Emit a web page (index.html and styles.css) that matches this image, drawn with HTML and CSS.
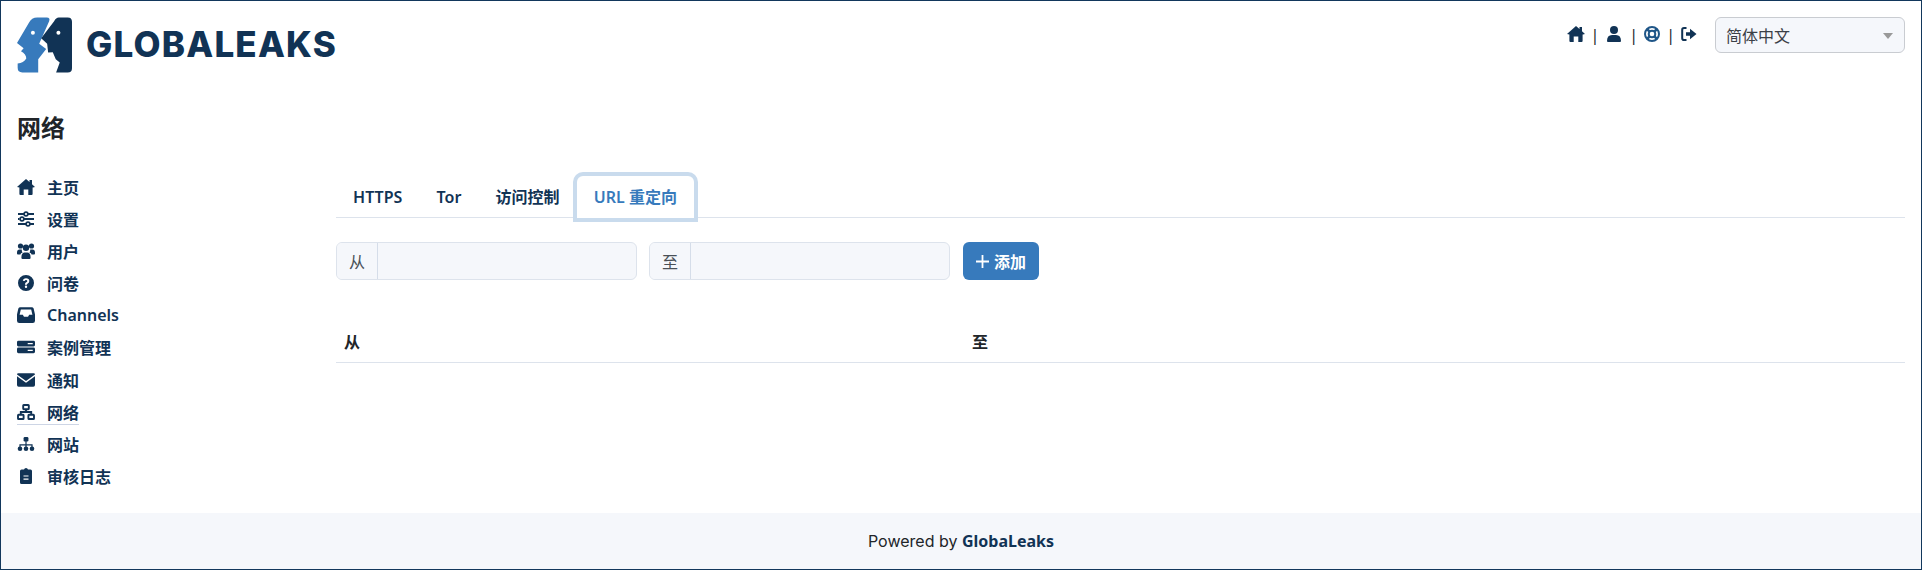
FILE: index.html
```html
<!DOCTYPE html>
<html lang="zh">
<head>
<meta charset="utf-8">
<title>GlobaLeaks</title>
<link rel="stylesheet" href="styles.css">
</head>
<body>
<div class="app">
  <header class="topbar">
    <div class="brand">
      <svg class="logo-mark" viewBox="52 52 166 166">
        <path fill="#377abc" d="M88,68 Q96,52 113,52 L142,52 Q153,52 149,63 L119,131 L140,147 L116,178 L116,218 L68,218 Q54,218 54,204 L54,191 Q72,189 80,176 Q80,163 64,154 L72,145 L52,129 Z"/>
        <circle fill="#fff" cx="100" cy="98" r="6"/>
        <path fill="#113355" d="M178,52 L205,52 Q218,52 218,65 L218,205 Q218,218 205,218 L170,218 L181,188 L169,178 L160,157 L146,158 L143,131 L125,115 L164,63 Q170,52 178,52 Z"/>
        <circle fill="#fff" cx="177" cy="98" r="6"/>
      </svg>
      <span class="wordmark">GLOBALEAKS</span>
    </div>
    <div class="tools">
      <nav class="quick">
        <svg class="qi home" viewBox="0 0 18 16"><path d="M9 0 L12.5 3 L12.5 1 L15 1 L15 5.2 L18 8 L16 8.4 L15.6 8.4 L15.6 15 Q15.6 16 14.6 16 L11.3 16 L11.3 10.5 L6.7 10.5 L6.7 16 L3.4 16 Q2.4 16 2.4 15 L2.4 8.4 L0 8 Z"/></svg>
        <span class="sep">|</span>
        <svg class="qi user" viewBox="0 0 14 16"><circle cx="7" cy="4" r="4"/><path d="M0 15 Q0 9 5 9 L9 9 Q14 9 14 15 Q14 16 13 16 L1 16 Q0 16 0 15 Z"/></svg>
        <span class="sep">|</span>
        <svg class="qi ring" viewBox="0 0 16 16"><circle cx="8" cy="8" r="7" class="ring-o"/><circle cx="8" cy="8" r="3.3" class="ring-i"/><path d="M3 3 L5.6 5.6 M13 3 L10.4 5.6 M3 13 L5.6 10.4 M13 13 L10.4 10.4" class="ring-s"/></svg>
        <span class="sep">|</span>
        <svg class="qi out" viewBox="0 0 16 16"><path d="M5.5 2 L3 2 Q1.2 2 1.2 3.8 L1.2 12.2 Q1.2 14 3 14 L5.5 14" class="out-s"/><path d="M5 6.2 L9 6.2 L9 2.8 L15.5 8 L9 13.2 L9 9.8 L5 9.8 Z"/></svg>
      </nav>
      <div class="lang"><span>简体中文</span><i class="caret"></i></div>
    </div>
  </header>

  <h1 class="page-title">网络</h1>

  <div class="layout">
    <nav class="sidebar">
      <a class="nav-item"><svg viewBox="0 0 18 16"><path d="M9 0 L12.5 3 L12.5 1 L15 1 L15 5.2 L18 8 L16 8.4 L15.6 8.4 L15.6 15 Q15.6 16 14.6 16 L11.3 16 L11.3 10.5 L6.7 10.5 L6.7 16 L3.4 16 Q2.4 16 2.4 15 L2.4 8.4 L0 8 Z"/></svg><span>主页</span></a>
      <a class="nav-item"><svg viewBox="0 0 18 16" class="line"><path d="M1 3 H7 M11 3 H17 M1 8 H2.5 M7 8 H17 M1 13 H9 M13 13 H17"/><circle cx="9" cy="3" r="1.9"/><circle cx="5" cy="8" r="1.9"/><circle cx="11" cy="13" r="1.9"/></svg><span>设置</span></a>
      <a class="nav-item"><svg viewBox="0 0 18 16"><circle cx="3.5" cy="3" r="2.6"/><circle cx="14.5" cy="3" r="2.6"/><circle cx="9" cy="4.8" r="3.2"/><path d="M0 9.4 Q0 6.4 2.6 6.4 L4.8 6.4 Q4.6 8.4 5.6 9.6 Q3.6 10.4 3.4 11.4 L0.9 11.4 Q0 11.4 0 10.4 Z M18 9.4 Q18 6.4 15.4 6.4 L13.2 6.4 Q13.4 8.4 12.4 9.6 Q14.4 10.4 14.6 11.4 L17.1 11.4 Q18 11.4 18 10.4 Z M4.4 14.8 Q4.4 9.4 7.6 9.4 L10.4 9.4 Q13.6 9.4 13.6 14.8 Q13.6 16 12.4 16 L5.6 16 Q4.4 16 4.4 14.8 Z"/></svg><span>用户</span></a>
      <a class="nav-item"><svg viewBox="0 0 16 16"><path fill-rule="evenodd" d="M8 0 A8 8 0 1 1 8 16 A8 8 0 1 1 8 0 Z M8 3.2 Q5.2 3.2 4.8 5.8 L6.7 6.1 Q6.9 5 8 5 Q9.3 5 9.3 6 Q9.3 6.7 8.3 7.2 Q7 7.9 7 9.2 L7 9.8 L9 9.8 L9 9.4 Q9 8.8 9.8 8.4 Q11.3 7.6 11.3 5.9 Q11.3 3.2 8 3.2 Z M8 10.6 A1.2 1.2 0 1 0 8 13 A1.2 1.2 0 1 0 8 10.6 Z"/></svg><span>问卷</span></a>
      <a class="nav-item"><svg viewBox="0 0 16 14"><path fill-rule="evenodd" d="M3 0 L13 0 Q14.4 0 14.8 1.3 L16 6.5 L16 12 Q16 14 14 14 L2 14 Q0 14 0 12 L0 6.5 L1.2 1.3 Q1.6 0 3 0 Z M3.4 2 L2.3 6.8 L5.2 6.8 L6.2 8.6 L9.8 8.6 L10.8 6.8 L13.7 6.8 L12.6 2 Z"/></svg><span>Channels</span></a>
      <a class="nav-item"><svg viewBox="0 0 16 11"><path fill-rule="evenodd" d="M1.3 0 L14.7 0 Q16 0 16 1.3 L16 3.7 Q16 5 14.7 5 L1.3 5 Q0 5 0 3.7 L0 1.3 Q0 0 1.3 0 Z M9.5 2 L9.5 3 L14 3 L14 2 Z M1.3 6 L14.7 6 Q16 6 16 7.3 L16 9.7 Q16 11 14.7 11 L1.3 11 Q0 11 0 9.7 L0 7.3 Q0 6 1.3 6 Z M9.5 8 L9.5 9 L14 9 L14 8 Z"/></svg><span>案例管理</span></a>
      <a class="nav-item"><svg viewBox="0 0 16 12"><path d="M1.2 0 L14.8 0 Q16 0 16 1 L8 6.8 L0 1 Q0 0 1.2 0 Z M0 2.6 L8 8.4 L16 2.6 L16 10.5 Q16 12 14.5 12 L1.5 12 Q0 12 0 10.5 Z"/></svg><span>通知</span></a>
      <a class="nav-item active"><svg viewBox="0 0 18 16" class="line"><rect x="6.2" y="1" width="5.6" height="4.2" rx=".6"/><rect x="1" y="10.8" width="5.6" height="4.2" rx=".6"/><rect x="11.4" y="10.8" width="5.6" height="4.2" rx=".6"/><path d="M3.8 10.8 V8 H14.2 V10.8 M9 5.2 V8"/></svg><span>网络</span></a>
      <a class="nav-item"><svg viewBox="0 0 18 14"><rect x="6.6" y="0" width="4.8" height="4.4" rx="1.2"/><rect x="8.4" y="4" width="1.2" height="6"/><path d="M2.4 10 V7.2 H15.6 V10 H14.4 V8.4 H3.6 V10 Z"/><circle cx="3" cy="11.7" r="2.3"/><circle cx="9" cy="11.7" r="2.3"/><circle cx="15" cy="11.7" r="2.3"/></svg><span>网站</span></a>
      <a class="nav-item"><svg viewBox="0 0 12 16"><path fill-rule="evenodd" d="M4 1.5 Q4.4 0 6 0 Q7.6 0 8 1.5 L10.5 1.5 Q12 1.5 12 3 L12 14.5 Q12 16 10.5 16 L1.5 16 Q0 16 0 14.5 L0 3 Q0 1.5 1.5 1.5 Z M3.5 7.4 L3.5 8.6 L8.5 8.6 L8.5 7.4 Z M3.5 10.6 L3.5 11.8 L8.5 11.8 L8.5 10.6 Z"/></svg><span>审核日志</span></a>
    </nav>

    <main class="content">
      <ul class="tabs">
        <li class="tab">HTTPS</li>
        <li class="tab">Tor</li>
        <li class="tab">访问控制</li>
        <li class="tab tab-active">URL 重定向</li>
      </ul>
      <form class="add-form">
        <div class="input-group"><span class="addon">从</span><span class="field"></span></div>
        <div class="input-group"><span class="addon">至</span><span class="field"></span></div>
        <button type="button" class="btn"><svg class="plus" viewBox="0 0 13 13"><path d="M6.5 0 V13 M0 6.5 H13"/></svg><span>添加</span></button>
      </form>
      <table class="rules">
        <thead><tr><th class="col-from">从</th><th>至</th></tr></thead>
      </table>
    </main>
  </div>

  <footer class="footer">Powered by&nbsp;<b>GlobaLeaks</b></footer>
</div>
</body>
</html>
```
FILE: styles.css
```css
* { box-sizing: border-box; }
html, body { margin: 0; height: 570px; background: #fff; }
body { font-family: "Noto Sans", "Noto Sans CJK SC", sans-serif; font-size: 16px; color: #212529; overflow: hidden; }
.app { height: 570px; border: 1px solid #12375c; display: flex; flex-direction: column; }

.topbar { display: flex; justify-content: space-between; padding: 16px 16px 0; height: 72px; }
.brand { display: flex; align-items: flex-start; }
.logo-mark { width: 55px; height: 56px; display: block; }
.wordmark { font-family: Inter, sans-serif; font-weight: 800; font-size: 35px; line-height: 36px; color: #113355; margin: 0 0 0 14px; padding-top: 9px; letter-spacing: 1.2px; }
.tools { display: flex; align-items: flex-start; }
.quick { display: flex; align-items: center; height: 36px; gap: 6px; margin-right: 18px; color: #113355; }
.qi { display: block; fill: #113355; margin-bottom: 2px; }
.qi.home { width: 18px; height: 16px; }
.qi.user { width: 14px; height: 16px; margin: 0 2px 2px; }
.qi.ring { width: 16px; height: 16px; }
.qi.out { width: 16px; height: 16px; }
.ring-o, .ring-i { fill: none; stroke: #1f5688; stroke-width: 2; }
.ring-s { fill: none; stroke: #1f5688; stroke-width: 2.6; }
.out-s { fill: none; stroke: #113355; stroke-width: 2; }
.sep { color: #212529; line-height: 24px; }
.lang { width: 190px; height: 36px; border: 1px solid #c9ccd1; border-radius: 6px; background: #f5f7fb; display: flex; align-items: center; justify-content: space-between; padding: 0 11px 0 10px; color: #3b4047; }
.caret { width: 0; height: 0; border-left: 5px solid transparent; border-right: 5px solid transparent; border-top: 6px solid #999; margin-top: 2px; }

.page-title { font-size: 24px; font-weight: 700; line-height: 36px; margin: 37px 16px 0; color: #212529; }

.layout { display: flex; padding: 25px 16px 0; }
.sidebar { width: 319px; flex: none; display: flex; flex-direction: column; gap: 8.1px; padding-top: 4px; }
.nav-item { display: flex; align-items: center; height: 24px; width: max-content; color: #113355; font-weight: 600; }
.nav-item svg { width: 18px; height: 16px; margin-right: 12px; fill: #113355; flex: none; }
.nav-item.active { box-shadow: 0 1px 0 #cdd5e5; }
.nav-item svg.line { fill: none; stroke: #113355; stroke-width: 1.9; }
.nav-item svg.line circle { fill: #fff; stroke-width: 1.6; }

.content { flex: 1; min-width: 0; padding-top: 5px; }
.tabs { display: flex; list-style: none; margin: 0; padding: 0; border-bottom: 1px solid #dde3ec; height: 42px; }
.tab { padding: 8px 16.1px; border: 1px solid transparent; height: 42px; line-height: 24px; color: #113355; font-weight: 600; white-space: nowrap; border-radius: 6px 6px 0 0; }
.tab-active { color: #377abc; background: #fff; box-shadow: 0 0 0 4px #c9dbed; position: relative; }

.add-form { display: flex; align-items: stretch; gap: 12px; margin-top: 24px; height: 38px; }
.input-group { width: 301px; display: flex; border: 1px solid #dde3ec; border-radius: 6px; background: #f5f7fb; overflow: hidden; }
.addon { width: 41px; flex: none; display: flex; align-items: center; justify-content: center; border-right: 1px solid #d5dde9; color: #495057; background: #f5f7fb; }
.field { flex: 1; }
.btn { width: 76px; margin-left: 1px; border: 0; border-radius: 6px; background: #377abc; color: #fff; font: 600 16px "Noto Sans", "Noto Sans CJK SC", sans-serif; padding: 0; display: flex; align-items: center; justify-content: center; gap: 5px; white-space: nowrap; }
.plus { width: 13px; height: 13px; fill: none; stroke: #fff; stroke-width: 1.8; display: block; }

.rules { width: 100%; border-collapse: collapse; table-layout: fixed; margin-top: 42px; }
.rules th { text-align: left; font-weight: 700; padding: 8px; line-height: 24px; height: 36px; border-bottom: 1px solid #dde3ec; color: #212529; }
.col-from { width: 628px; }

.footer { margin-top: auto; height: 56px; background: #f5f7fb; display: flex; align-items: center; justify-content: center; font-family: Inter, "Noto Sans", sans-serif; color: #212529; }
.footer b { font-family: "Noto Sans", sans-serif; font-weight: 700; color: #113355; }
```
